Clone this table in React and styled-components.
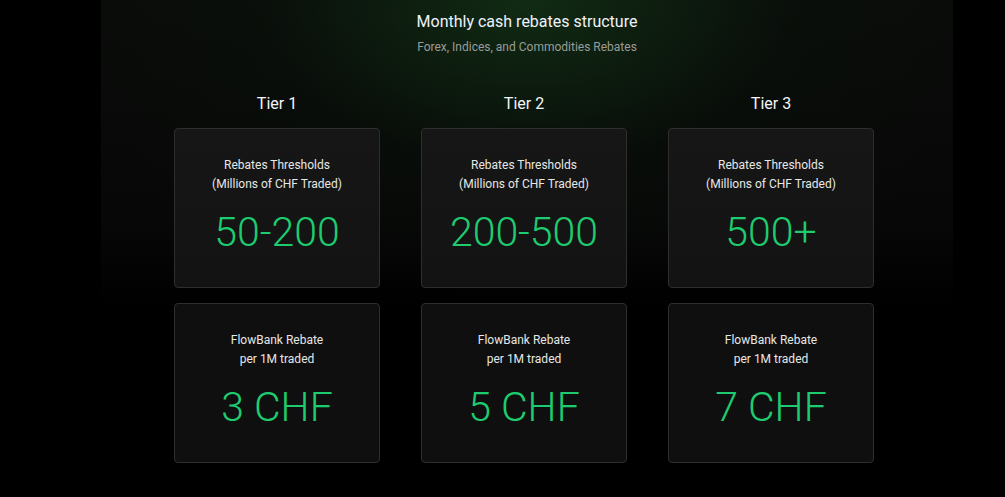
import styled, { createGlobalStyle } from "styled-components";

const GlobalStyle = createGlobalStyle`
  html, body {
    margin: 0;
    padding: 0;
    background: #000;
    height: 100%;
  }
  body {
    font-family: Roboto, "Liberation Sans", Arial, sans-serif;
    -webkit-font-smoothing: antialiased;
  }
`;

const tiers = [
  { name: "Tier 1", range: "50-200", rebate: "3 CHF" },
  { name: "Tier 2", range: "200-500", rebate: "5 CHF" },
  { name: "Tier 3", range: "500+", rebate: "7 CHF" },
];

const Page = styled.div`
  display: flex;
  min-height: 497px;
  background: #000;
`;

const Section = styled.section`
  width: 852px;
  margin-left: 101px;
  min-height: 497px;
  box-sizing: border-box;
  padding-top: 10px;
  display: flex;
  flex-direction: column;
  align-items: center;
  background:
    radial-gradient(ellipse 480px 300px at 50% 0%, rgba(22, 70, 28, 0.55), rgba(10, 30, 12, 0.2) 55%, rgba(0, 0, 0, 0) 100%),
    linear-gradient(to bottom, #0a0b0a 0%, #070707 45%, #000 62%);
`;

const Title = styled.h2`
  margin: 0;
  font-size: 16px;
  line-height: 24px;
  font-weight: 400;
  color: #eef3fb;
`;

const Subtitle = styled.p`
  margin: 4px 0 0;
  font-size: 12px;
  line-height: 18px;
  color: #9a9c98;
`;

const Grid = styled.div`
  display: grid;
  grid-template-columns: repeat(3, 206px);
  column-gap: 41px;
  margin-top: 36px;
  margin-left: -6px;
`;

const Column = styled.div`
  display: flex;
  flex-direction: column;
`;

const TierLabel = styled.h3`
  margin: 0 0 12px;
  font-size: 16px;
  line-height: 24px;
  font-weight: 400;
  text-align: center;
  color: #f2f5fa;
`;

const Card = styled.div`
  height: 160px;
  box-sizing: border-box;
  border: 1px solid #2d2e2d;
  border-radius: 4px;
  padding-top: 27px;
  text-align: center;
  background: ${(p) =>
    p.$top ? "linear-gradient(to bottom, #151615, #121312)" : "#0f0f0f"};
  & + & {
    margin-top: 15px;
  }
`;

const CardLabel = styled.div`
  font-size: 12px;
  line-height: 19px;
  color: #e6e7e6;
`;

const Value = styled.div`
  margin-top: 14px;
  font-size: 41px;
  line-height: 48px;
  font-weight: 300;
  color: #1ecc70;
`;

export default function App() {
  return (
    <>
      <GlobalStyle />
      <Page>
        <Section>
          <Title>Monthly cash rebates structure</Title>
          <Subtitle>Forex, Indices, and Commodities Rebates</Subtitle>
          <Grid>
            {tiers.map((t) => (
              <Column key={t.name}>
                <TierLabel>{t.name}</TierLabel>
                <Card $top>
                  <CardLabel>
                    Rebates Thresholds
                    <br />
                    (Millions of CHF Traded)
                  </CardLabel>
                  <Value>{t.range}</Value>
                </Card>
                <Card>
                  <CardLabel>
                    FlowBank Rebate
                    <br />
                    per 1M traded
                  </CardLabel>
                  <Value>{t.rebate}</Value>
                </Card>
              </Column>
            ))}
          </Grid>
        </Section>
      </Page>
    </>
  );
}
